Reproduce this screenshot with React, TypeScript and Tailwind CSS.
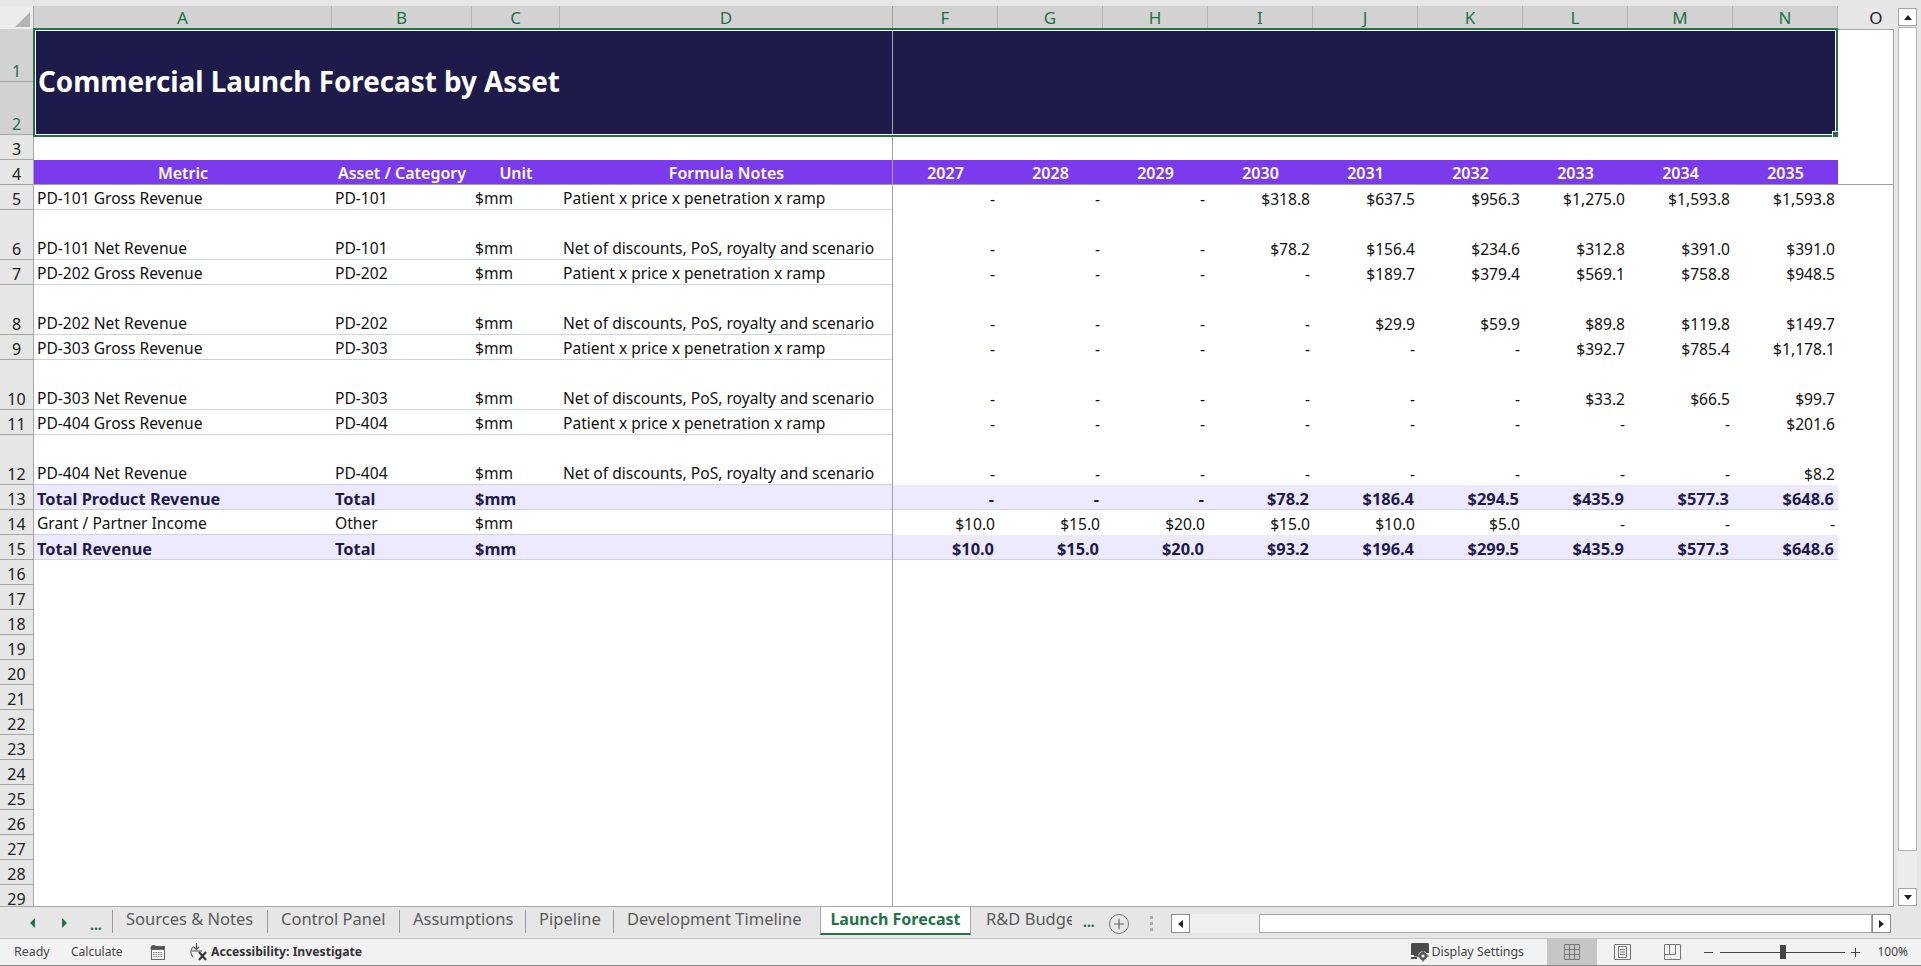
const font = "font-['Noto_Sans',sans-serif]";

const columnLetters = [
  { l: "A", w: "w-[298px]" },
  { l: "B", w: "w-[140px]" },
  { l: "C", w: "w-[88px]" },
  { l: "D", w: "w-[333px]" },
  { l: "F", w: "w-[105px]" },
  { l: "G", w: "w-[105px]" },
  { l: "H", w: "w-[105px]" },
  { l: "I", w: "w-[105px]" },
  { l: "J", w: "w-[105px]" },
  { l: "K", w: "w-[105px]" },
  { l: "L", w: "w-[105px]" },
  { l: "M", w: "w-[105px]" },
  { l: "N", w: "w-[105px]" },
];

const years = ["2027", "2028", "2029", "2030", "2031", "2032", "2033", "2034", "2035"];

type Row = { n: number; tall?: boolean; kind?: "total"; cells: string[]; vals: string[] };

const rows: Row[] = [
  { n: 5, cells: ["PD-101 Gross Revenue", "PD-101", "$mm", "Patient x price x penetration x ramp"], vals: ["-", "-", "-", "$318.8", "$637.5", "$956.3", "$1,275.0", "$1,593.8", "$1,593.8"] },
  { n: 6, tall: true, cells: ["PD-101 Net Revenue", "PD-101", "$mm", "Net of discounts, PoS, royalty and scenario"], vals: ["-", "-", "-", "$78.2", "$156.4", "$234.6", "$312.8", "$391.0", "$391.0"] },
  { n: 7, cells: ["PD-202 Gross Revenue", "PD-202", "$mm", "Patient x price x penetration x ramp"], vals: ["-", "-", "-", "-", "$189.7", "$379.4", "$569.1", "$758.8", "$948.5"] },
  { n: 8, tall: true, cells: ["PD-202 Net Revenue", "PD-202", "$mm", "Net of discounts, PoS, royalty and scenario"], vals: ["-", "-", "-", "-", "$29.9", "$59.9", "$89.8", "$119.8", "$149.7"] },
  { n: 9, cells: ["PD-303 Gross Revenue", "PD-303", "$mm", "Patient x price x penetration x ramp"], vals: ["-", "-", "-", "-", "-", "-", "$392.7", "$785.4", "$1,178.1"] },
  { n: 10, tall: true, cells: ["PD-303 Net Revenue", "PD-303", "$mm", "Net of discounts, PoS, royalty and scenario"], vals: ["-", "-", "-", "-", "-", "-", "$33.2", "$66.5", "$99.7"] },
  { n: 11, cells: ["PD-404 Gross Revenue", "PD-404", "$mm", "Patient x price x penetration x ramp"], vals: ["-", "-", "-", "-", "-", "-", "-", "-", "$201.6"] },
  { n: 12, tall: true, cells: ["PD-404 Net Revenue", "PD-404", "$mm", "Net of discounts, PoS, royalty and scenario"], vals: ["-", "-", "-", "-", "-", "-", "-", "-", "$8.2"] },
  { n: 13, kind: "total", cells: ["Total Product Revenue", "Total", "$mm", ""], vals: ["-", "-", "-", "$78.2", "$186.4", "$294.5", "$435.9", "$577.3", "$648.6"] },
  { n: 14, cells: ["Grant / Partner Income", "Other", "$mm", ""], vals: ["$10.0", "$15.0", "$20.0", "$15.0", "$10.0", "$5.0", "-", "-", "-"] },
  { n: 15, kind: "total", cells: ["Total Revenue", "Total", "$mm", ""], vals: ["$10.0", "$15.0", "$20.0", "$93.2", "$196.4", "$299.5", "$435.9", "$577.3", "$648.6"] },
];

const emptyRows = [16, 17, 18, 19, 20, 21, 22, 23, 24, 25, 26, 27, 28, 29];
const tabs = [
  { t: "Sources & Notes", w: "w-[155px]" },
  { t: "Control Panel", w: "w-[132px]" },
  { t: "Assumptions", w: "w-[126px]" },
  { t: "Pipeline", w: "w-[88px]" },
  { t: "Development Timeline", w: "w-[207px]" },
];

function RowHead({ n, tall }: { n: number; tall?: boolean }) {
  return (
    <div
      className={`w-[34px] shrink-0 flex items-end justify-center text-[16px] leading-[20px] border-r border-b border-[#a6a6a6] bg-[#e6e6e6] text-[#222] ${
        tall ? "h-[50px]" : "h-[25px]"
      }`}
    >
      {n}
    </div>
  );
}

function DataRow({ row }: { row: Row }) {
  const total = row.kind === "total";
  const base = `flex items-end leading-[21px] whitespace-nowrap ${total ? "font-bold text-[16.4px]" : "text-[15.6px]"}`;
  return (
    <div className={`flex shrink-0 ${row.tall ? "h-[50px]" : "h-[25px]"}`}>
      <RowHead n={row.n} tall={row.tall} />
      <div className={`flex ${total ? "bg-[#ede9fe] text-[#1e1b4b]" : "text-[#111]"}`}>
        <div className="flex border-b border-[#cbd5e1]">
          <div className={`${base} w-[298px] pl-[3px]`}>{row.cells[0]}</div>
          <div className={`${base} w-[140px] pl-[3px]`}>{row.cells[1]}</div>
          <div className={`${base} w-[88px] pl-[3px]`}>{row.cells[2]}</div>
          <div className={`${base} w-[333px] pl-[3px]`}>{row.cells[3]}</div>
        </div>
        {row.vals.map((v, i) => (
          <div key={i} className={`${base} w-[105px] justify-end ${total ? "pr-[4px] border-b border-[#cbd5e1]" : "pr-[3px]"}`}>
            {v}
          </div>
        ))}
      </div>
    </div>
  );
}

function CalcIcon() {
  return (
    <svg width="16" height="15" viewBox="0 0 16 15" className="shrink-0">
      <circle cx="3.5" cy="3" r="3" fill="#555" />
      <rect x="5" y="1" width="10" height="3" fill="#555" />
      <rect x="1.5" y="4.5" width="13" height="10" fill="#fff" stroke="#666" />
      <path d="M3 7.5h10M3 9.5h10M3 11.5h10" stroke="#777" strokeDasharray="1.5 1" />
    </svg>
  );
}

function AccessIcon() {
  return (
    <svg width="20" height="18" viewBox="0 0 20 18" fill="none" className="shrink-0">
      <path d="M5.5 3.5A7 7 0 0 0 5 14" stroke="#666" strokeWidth="1.2" />
      <path d="M8.5 0v6M6 4l2.5 2.5L11 4" stroke="#555" strokeWidth="1.2" />
      <path d="M4 8h10" stroke="#666" strokeWidth="1.2" />
      <path d="M11 9l7 8M18 9l-7 8" stroke="#333" strokeWidth="2" />
    </svg>
  );
}

function DisplayIcon() {
  return (
    <svg width="20" height="20" viewBox="0 0 20 20" className="shrink-0">
      <path d="M1 2.5Q1 1 2.5 1h15Q19 1 19 2.5V11H10v3.5H4v-1.5H1Z" fill="#4a4a4a" />
      <path d="M1 15h6v2H1Z" fill="#4a4a4a" />
      <circle cx="13" cy="14" r="4.5" fill="#555" stroke="#f2f2f2" strokeWidth="0.8" />
      <circle cx="13" cy="14" r="1.6" fill="#f2f2f2" />
      <path d="M13 8.5v2M13 17.5v2M7.5 14h2M16.5 14h2" stroke="#555" strokeWidth="1.5" />
    </svg>
  );
}

function GridIcon() {
  return (
    <svg width="16" height="16" viewBox="0 0 16 16" fill="none" stroke="#777">
      <path d="M.5.5h15v15H.5zM5.5.5v15M10.5.5v15M.5 5.5h15M.5 10.5h15" />
    </svg>
  );
}

function PageIcon() {
  return (
    <svg width="17" height="16" viewBox="0 0 17 16" fill="none" stroke="#777">
      <path d="M.5.5h16v15H.5zM4.5 2.5h8v11h-8zM6 5.5h5M6 8h5M6 10.5h5" />
    </svg>
  );
}

function BreakIcon() {
  return (
    <svg width="17" height="16" viewBox="0 0 17 16" fill="none" stroke="#777">
      <path d="M.5.5h16v15H.5zM.5 10.5h11M5.5.5v10M11.5.5v10" />
    </svg>
  );
}

export default function App() {
  return (
    <div className={`${font} w-[1921px] h-[966px] overflow-hidden flex flex-col bg-white relative`}>
      <div className="flex h-[907px] shrink-0">
        {/* grid area */}
        <div className="w-[1894px] shrink-0 flex flex-col overflow-hidden border-b border-[#a6a6a6] relative">
          <div className="h-[6px] bg-[#e6e6e6] shrink-0" />
          {/* column letters */}
          <div className="flex h-[23px] shrink-0">
            <div className="w-[34px] bg-[#ececec] flex items-end justify-end pr-[3px] pb-[2px] border-r border-[#a6a6a6]">
              <div className="w-0 h-0 border-l-[15px] border-l-transparent border-b-[15px] border-b-[#b4b4b4]" />
            </div>
            {columnLetters.map((c) => (
              <div
                key={c.l}
                className={`${c.w} bg-[#d2d2d2] text-[#217346] text-[17px] flex items-center justify-center border-r border-[#b4b4b4]`}
              >
                {c.l}
              </div>
            ))}
            <div className="flex-1 bg-[#e6e6e6] text-[17px] text-[#222] flex items-center justify-center pl-[20px]">
              O
            </div>
          </div>
          {/* title rows */}
          <div className="flex shrink-0 h-[106px]">
            <div className="w-[34px] shrink-0 flex flex-col">
              <div className="h-[53px] bg-[#d2d2d2] text-[#217346] text-[16px] leading-[20px] flex items-end justify-center border-r border-b border-[#a6a6a6]">1</div>
              <div className="h-[53px] bg-[#d2d2d2] text-[#217346] text-[16px] leading-[20px] flex items-end justify-center border-r border-b border-[#a6a6a6]">2</div>
            </div>
            <div className="w-[1803px] bg-[#1e1b4b] flex items-center pl-[4px] text-white text-[27.8px] font-bold whitespace-nowrap">
              Commercial Launch Forecast by Asset
            </div>
          </div>
          {/* row 3 */}
          <div className="flex shrink-0 h-[25px]">
            <RowHead n={3} />
          </div>
          {/* header row */}
          <div className="flex shrink-0 h-[25px] border-b border-[#a0a0a0]">
            <div className="w-[34px] shrink-0 bg-[#e6e6e6] text-[16px] leading-[20px] text-[#222] flex items-end justify-center border-r border-[#a6a6a6]">4</div>
            <div className="flex bg-[#7c3aed] text-white font-semibold text-[16px] leading-[26px]">
              <div className="w-[298px] text-center">Metric</div>
              <div className="w-[140px] text-center whitespace-nowrap">Asset / Category</div>
              <div className="w-[88px] text-center">Unit</div>
              <div className="w-[333px] text-center">Formula Notes</div>
              {years.map((y) => (
                <div key={y} className="w-[105px] text-center">{y}</div>
              ))}
            </div>
          </div>
          {rows.map((r) => (
            <DataRow key={r.n} row={r} />
          ))}
          {emptyRows.map((n) => (
            <div key={n} className="flex shrink-0 h-[25px]">
              <RowHead n={n} />
            </div>
          ))}
          {/* freeze pane line */}
          <div className="absolute left-[892px] top-[6px] bottom-0 w-px bg-[#a0a0a0]" />
          {/* sheet right edge */}
          <div className="absolute right-0 top-[29px] bottom-0 w-px bg-[#a6a6a6]" />
          <div className="absolute left-[1837px] right-0 top-[29px] h-px bg-[#a6a6a6]" />
          {/* selection box */}
          <div className="absolute left-[33px] top-[28px] w-[1805px] h-[109px] border-2 border-[#217346]">
            <div className="w-full h-full border border-white" />
            <div className="absolute -right-[3px] -bottom-[3px] w-[7px] h-[7px] bg-[#217346] border border-white" />
          </div>
        </div>
        {/* vertical scrollbar */}
        <div className="flex-1 flex flex-col pl-[4px] bg-[#e6e6e6] pt-[8px]">
          <div className="w-[19px] h-[18px] bg-white border border-[#a6a6a6] flex items-center justify-center">
            <div className="w-0 h-0 border-x-[4px] border-x-transparent border-b-[5px] border-b-[#222]" />
          </div>
          <div className="w-[19px] h-[824px] mt-[1px] bg-white border border-[#b4b4b4]" />
          <div className="w-[19px] flex-1 bg-[#ececec]" />
          <div className="w-[19px] h-[18px] mb-[1px] bg-white border border-[#a6a6a6] flex items-center justify-center">
            <div className="w-0 h-0 border-x-[4px] border-x-transparent border-t-[5px] border-t-[#222]" />
          </div>
        </div>
      </div>

      {/* tab bar */}
      <div className="h-[32px] shrink-0 bg-[#e6e6e6] flex items-start border-b border-[#c4c4c4] text-[16.5px] text-[#5a5a5a]">
        <div className="w-[112px] h-[31px] flex items-center pl-[30px] text-[#217346] shrink-0">
          <div className="w-0 h-0 border-y-[5px] border-y-transparent border-r-[5px] border-r-[#217346]" />
          <div className="ml-[27px] w-0 h-0 border-y-[5px] border-y-transparent border-l-[5px] border-l-[#217346]" />
          <span className="ml-[23px] text-[14px] font-bold leading-none mt-[4px]">...</span>
        </div>
        {tabs.map((tab) => (
          <div key={tab.t} className={`${tab.w} mt-[3px] h-[23px] pb-[4px] pl-[13px] flex items-center border-l border-[#9a9a9a] whitespace-nowrap`}>
            {tab.t}
          </div>
        ))}
        <div className="h-[28px] w-[151px] shrink-0 bg-white border-x border-[#a6a6a6] border-b-2 border-b-[#217346] pb-[3px] flex items-center justify-center font-bold text-[#217346] whitespace-nowrap text-[16px]">
          Launch Forecast
        </div>
        <div className="mt-[3px] ml-[15px] h-[23px] pb-[4px] flex items-center whitespace-nowrap w-[86px] overflow-hidden shrink-0">R&amp;D Budget</div>
        <span className="text-[#217346] text-[14px] font-bold mt-[6px] w-[26px] ml-[11px] shrink-0 leading-[18px]">...</span>
        <div className="mt-[7px] w-[20px] h-[20px] shrink-0 rounded-full border border-[#777] flex items-center justify-center">
          <svg width="10" height="10" viewBox="0 0 10 10" stroke="#666" strokeWidth="1.2"><path d="M5 0v10M0 5h10" /></svg>
        </div>
        <div className="mt-[9px] ml-[21px] w-[3px] h-[15px] shrink-0 flex flex-col justify-between">
          <i className="block w-[3px] h-[3px] bg-[#b0b0b0]" />
          <i className="block w-[3px] h-[3px] bg-[#b0b0b0]" />
          <i className="block w-[3px] h-[3px] bg-[#b0b0b0]" />
        </div>
        <div className="ml-[18px] mt-[7px] w-[720px] h-[19px] flex shrink-0">
          <div className="w-[19px] bg-white border border-[#8a8a8a] flex items-center justify-center">
            <div className="w-0 h-0 border-y-[4px] border-y-transparent border-r-[5px] border-r-[#222]" />
          </div>
          <div className="w-[69px] bg-[#efefef]" />
          <div className="flex-1 bg-white border border-[#a6a6a6]" />
          <div className="w-[19px] bg-white border border-[#8a8a8a] flex items-center justify-center">
            <div className="w-0 h-0 border-y-[4px] border-y-transparent border-l-[5px] border-l-[#222]" />
          </div>
        </div>
      </div>

      {/* status bar */}
      <div className="h-[27px] shrink-0 bg-[#f2f2f2] border-b border-[#8a8a8a] flex items-center text-[12.4px] text-[#444]">
        <span className="ml-[14px] w-[36px]">Ready</span>
        <span className="ml-[21px] w-[79px] text-[12px]">Calculate</span>
        <CalcIcon />
        <span className="ml-[22px]"><AccessIcon /></span>
        <span className="ml-[3px] font-bold text-[#333] text-[12.2px] whitespace-nowrap">Accessibility: Investigate</span>
        <div className="flex-1" />
        <DisplayIcon />
        <span className="ml-[1px] w-[95px] whitespace-nowrap">Display Settings</span>
        <div className="ml-[21px] w-[50px] h-full bg-[#c6c6c6] flex items-center justify-center"><GridIcon /></div>
        <div className="w-[50px] flex justify-center"><PageIcon /></div>
        <div className="w-[50px] flex justify-center"><BreakIcon /></div>
        <div className="ml-[7px] w-[9px] h-px bg-[#444]" />
        <div className="ml-[7px] w-[125px] h-px bg-[#444] relative">
          <div className="absolute left-[60px] -top-[7px] w-[6px] h-[14px] bg-[#444]" />
        </div>
        <svg width="9" height="9" viewBox="0 0 9 9" stroke="#444" className="ml-[6px]"><path d="M4.5 0v9M0 4.5h9" /></svg>
        <span className="ml-[17px] mr-[13px] text-[12px]">100%</span>
      </div>
    </div>
  );
}
